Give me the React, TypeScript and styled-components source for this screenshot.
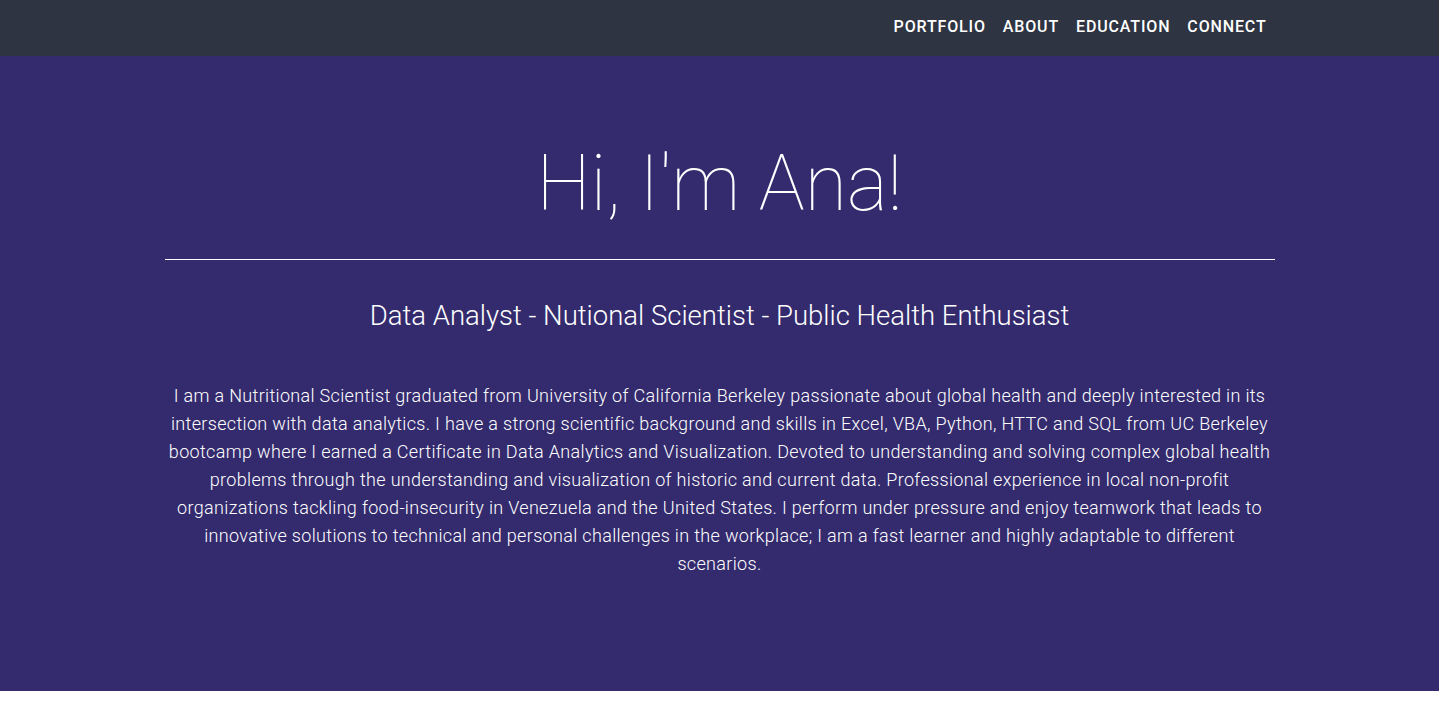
import React from "react";
import styled, { createGlobalStyle } from "styled-components";

const Global = createGlobalStyle`
  html, body { margin: 0; padding: 0; background: #ffffff; }
  body { font-family: Roboto, "Liberation Sans", sans-serif; }
  * { box-sizing: border-box; }
`;

const Nav = styled.nav`
  height: 56px;
  background: #2e3441;
  display: flex;
  justify-content: center;
`;

const NavInner = styled.div`
  width: 1140px;
  padding: 0 15px 4px;
  display: flex;
  justify-content: flex-end;
  align-items: center;
`;

const NavLink = styled.a`
  color: #ffffff;
  text-decoration: none;
  font-family: Roboto, sans-serif;
  font-weight: 500;
  font-size: 16px;
  letter-spacing: 0.85px;
  padding: 0 8px;
  margin-left: 1px;
`;

const Hero = styled.header`
  background: #342b6e;
  height: 635px;
  display: flex;
  justify-content: center;
`;

const Container = styled.div`
  width: 1140px;
  padding: 0 15px;
  color: #ffffff;
  text-align: center;
`;

const Title = styled.h1`
  margin: 80px 0 0;
  font-weight: 100;
  font-size: 77px;
  line-height: 96px;
`;

const Rule = styled.hr`
  margin: 27px 0 0;
  border: 0;
  border-top: 1px solid #ffffff;
`;

const Subtitle = styled.h2`
  margin: 38px 0 0;
  font-weight: 300;
  font-size: 27.5px;
  line-height: 36px;
`;

const Paragraph = styled.p`
  margin: 48px 0 0;
  font-weight: 300;
  font-size: 18px;
  line-height: 28px;
  letter-spacing: 0.33px;
`;

export default function App() {
  return (
    <>
      <Global />
      <Nav>
        <NavInner>
          <NavLink href="#portfolio">PORTFOLIO</NavLink>
          <NavLink href="#about">ABOUT</NavLink>
          <NavLink href="#education">EDUCATION</NavLink>
          <NavLink href="#connect">CONNECT</NavLink>
        </NavInner>
      </Nav>
      <Hero>
        <Container>
          <Title>Hi, I'm Ana!</Title>
          <Rule />
          <Subtitle>Data Analyst - Nutional Scientist - Public Health Enthusiast</Subtitle>
          <Paragraph>
            I am a Nutritional Scientist graduated from University of California Berkeley passionate about global health and deeply interested in its intersection with data analytics. I have a strong scientific background and skills in Excel, VBA, Python, HTTC and SQL from UC Berkeley bootcamp where I earned a Certificate in Data Analytics and Visualization. Devoted to understanding and solving complex global health problems through the understanding and visualization of historic and current data. Professional experience in local non-profit organizations tackling food-insecurity in Venezuela and the United States. I perform under pressure and enjoy teamwork that leads to innovative solutions to technical and personal challenges in the workplace; I am a fast learner and highly adaptable to different scenarios.
          </Paragraph>
        </Container>
      </Hero>
    </>
  );
}
